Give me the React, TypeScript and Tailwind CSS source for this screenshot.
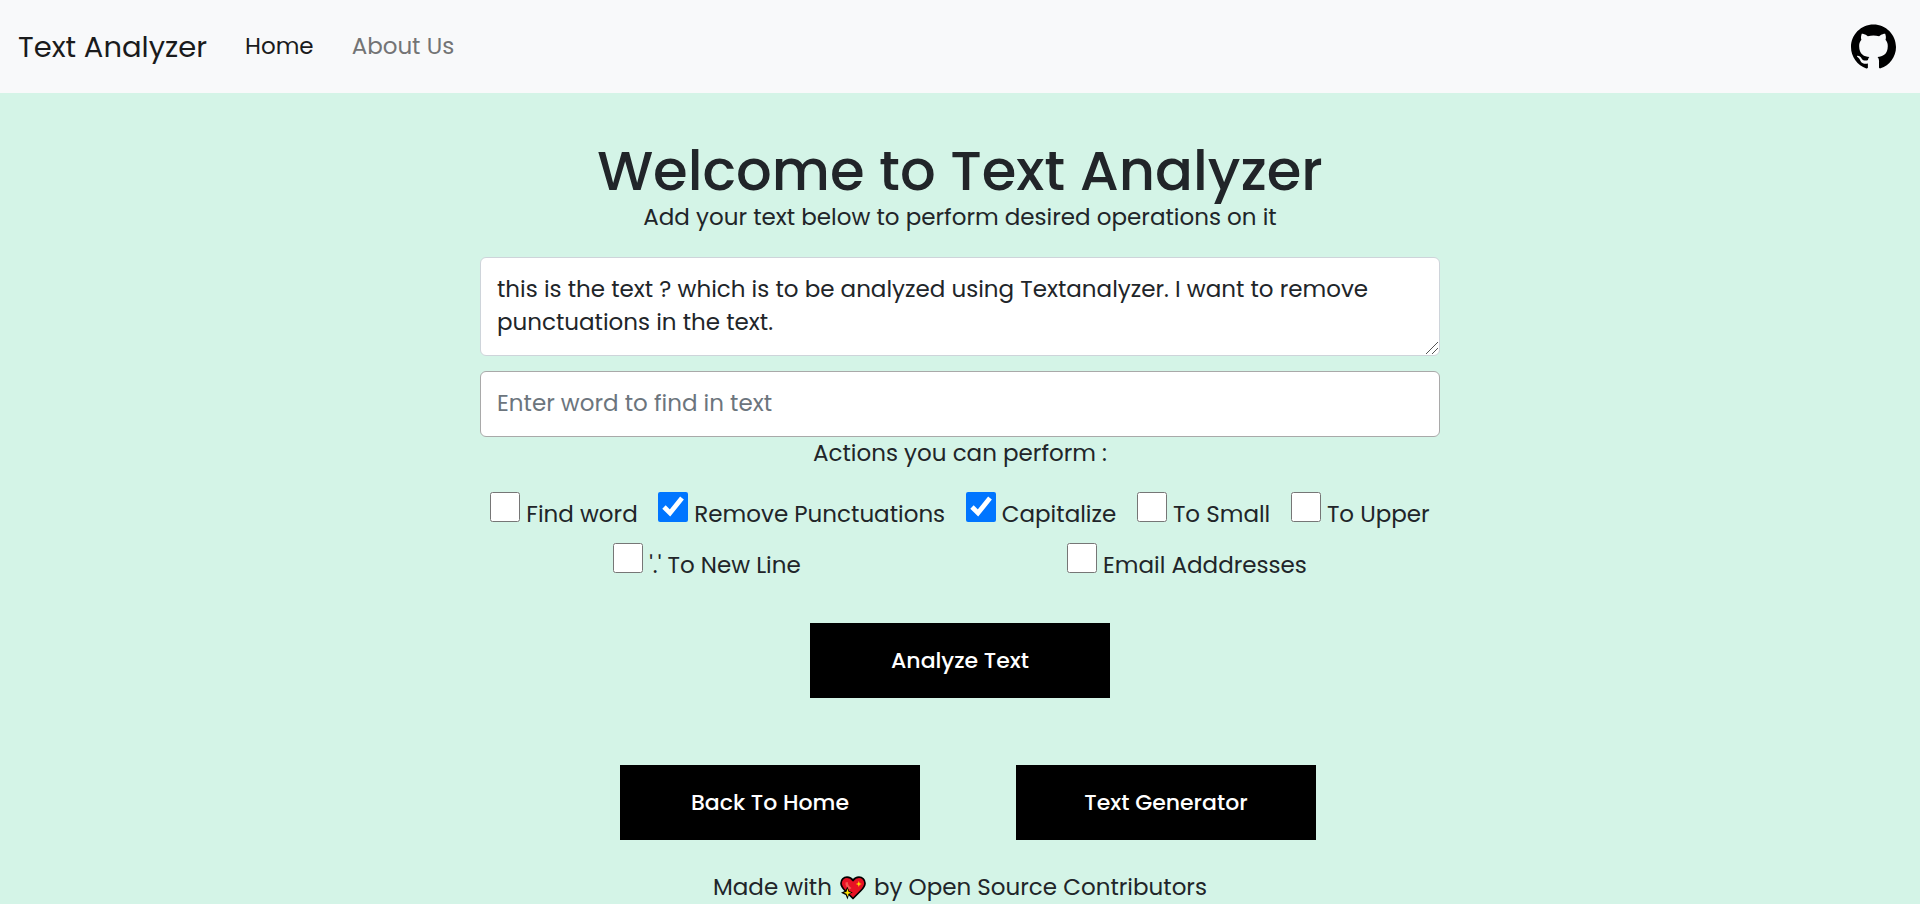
import { useState } from "react";
import { SiGithub } from "react-icons/si";

const actions = [
  { id: "find", label: "Find word", checked: false },
  { id: "punctuation", label: "Remove Punctuations", checked: true },
  { id: "capitalize", label: "Capitalize", checked: true },
  { id: "small", label: "To Small", checked: false },
  { id: "upper", label: "To Upper", checked: false },
  { id: "newline", label: "'.' To New Line", checked: false },
  { id: "email", label: "Email Adddresses", checked: false },
];

function SparklingHeart() {
  return (
    <svg viewBox="0 0 26 24" className="mx-2 h-6 w-[26px]" role="img" aria-label="love">
      <path
        d="M13 22.5 5.5 15C2.5 12 1 10 1 7.2 1 3.7 3.7 1.2 7 1.2c2.500 0 4.700 1.300 6 3.300 1.300-2 3.500-3.300 6-3.300 3.300 0 6 2.500 6 6 0 2.800-1.500 4.800-4.500 7.800Z"
        fill="#e81224"
        stroke="#000"
        strokeWidth="1.700"
        strokeLinejoin="round"
      />
      <path d="M5.500 6.500c-.5 3 1.500 5.500 4 7l2-1.500C9.500 11 7.800 9 7.700 6Z" fill="#f4574f" />
      <path d="m18.800 5 .8 2.200 2.200.8-2.200.8-.8 2.200-.8-2.200-2.200-.8 2.200-.8Z" fill="#ffe000" />
      <path
        d="m7.500 10.800 1.600 4.100 3.700 1.600-3.700 1.600-1.600 5.400-1.800-4.600L1 16.800l4.200-2Z"
        fill="#000"
      />
      <path d="m7.500 12.500 1 3.200 2.700 1-2.700 1-1 3-1-3-2.700-1 2.700-1Z" fill="#ffe000" />
    </svg>
  );
}

const buttonClass =
  "h-[75px] w-[300px] cursor-pointer bg-black text-[22px] leading-[33px] font-medium text-white";

export default function App() {
  const [text, setText] = useState(
    "this is the text ? which is to be analyzed using Textanalyzer. I want to remove punctuations in the text.",
  );
  const [word, setWord] = useState("");

  return (
    <div className="bg-[#d4f4e7] font-['Poppins','Inter',sans-serif] text-[23px] leading-[33px] text-[#212529]">
      <nav className="flex h-[93px] items-center bg-[#f8f9fa] pr-6 pl-[18px]">
        <a href="#" className="text-[29px] leading-[42px] text-[#1a1b1c]">
          Text Analyzer
        </a>
        <div className="ml-[38px] flex gap-[38px]">
          <a href="#home" className="text-[#1a1b1c]">
            Home
          </a>
          <a href="#about" className="text-[#737475]">
            About Us
          </a>
        </div>
        <a href="#github" aria-label="GitHub" className="ml-auto text-black">
          <SiGithub className="size-[45px]" />
        </a>
      </nav>

      <main className="mx-auto flex w-full max-w-[960px] flex-col items-center pt-12">
        <h1 className="text-[56px] leading-[60px] font-medium">Welcome to Text Analyzer</h1>
        <p>Add your text below to perform desired operations on it</p>

        <div className="relative mt-[23px] w-full">
          <textarea
            aria-label="Text to analyze"
            rows={2}
            value={text}
            onChange={(e) => setText(e.target.value)}
            className="block h-[99px] w-full resize-none rounded-md border border-[#ced4da] bg-white px-4 py-[15px]"
          />
          <svg
            viewBox="0 0 12 12"
            aria-hidden="true"
            className="pointer-events-none absolute right-0.5 bottom-0.5 size-3"
          >
            <path d="M0 12 12 0M6 12l6-6" stroke="#555" strokeWidth="1" fill="none" />
          </svg>
        </div>
        <input
          type="text"
          aria-label="Word to find"
          placeholder="Enter word to find in text"
          value={word}
          onChange={(e) => setWord(e.target.value)}
          className="mt-[15px] h-[66px] w-full rounded-md border border-[#a9a9a9] bg-white px-4 pb-0.5 placeholder:text-[#6c757d]"
        />
        <p>Actions you can perform :</p>

        <div className="mt-[22px] flex w-full flex-wrap justify-around gap-y-3">
          {actions.map((action) => (
            <div key={action.id} className="flex h-[39px] gap-1.5">
              <input
                id={action.id}
                type="checkbox"
                defaultChecked={action.checked}
                className="size-[30px] accent-[#0075ff]"
              />
              <label htmlFor={action.id} className="pt-1.5">
                {action.label}
              </label>
            </div>
          ))}
        </div>

        <button type="button" className={`${buttonClass} mt-[41px]`}>
          Analyze Text
        </button>
        <div className="mt-[67px] flex gap-24 pl-4">
          <button type="button" className={buttonClass}>
            Back To Home
          </button>
          <button type="button" className={buttonClass}>
            Text Generator
          </button>
        </div>
      </main>

      <footer className="mt-[31px] flex items-center justify-center">
        <span>Made with</span>
        <SparklingHeart />
        <span>by Open Source Contributors</span>
      </footer>
    </div>
  );
}
